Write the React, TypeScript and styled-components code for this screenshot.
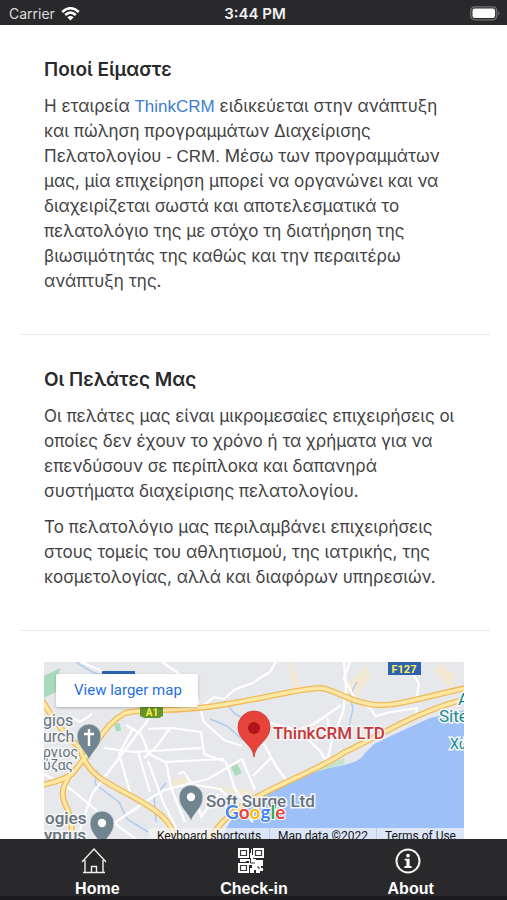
import React from "react";
import styled, { createGlobalStyle } from "styled-components";

const GlobalStyle = createGlobalStyle`
  *, *::before, *::after { box-sizing: border-box; }
  body {
    margin: 0;
    background: #fff;
    color: #414143;
    font-family: Inter, "Liberation Sans", sans-serif;
  }
`;

const Screen = styled.div`
  display: flex;
  flex-direction: column;
  height: 100vh;
`;

const StatusBar = styled.header`
  flex: none;
  display: grid;
  grid-template-columns: 1fr auto 1fr;
  align-items: center;
  height: 25px;
  padding: 2px 6px 0 9px;
  background: #29292b;
  color: #f2f2f2;
  font-size: 14px;
  line-height: 20px;
`;

const Carrier = styled.div`
  display: flex;
  align-items: center;
  gap: 6px;
  color: #dcdcdc;
`;

const Clock = styled.time`
  font-size: 15px;
  font-weight: 600;
`;

const Battery = styled.svg`
  justify-self: end;
`;

const Content = styled.main`
  flex: 1;
  min-height: 0;
  overflow: hidden auto;
  scrollbar-width: none;
  padding: 0 17px 0 20px;
`;

const Section = styled.section`
  padding: 32px 24px 29px;
  border-bottom: 1px solid #e9e9e9;
`;

const Title = styled.h2`
  margin: 0 0 11px;
  color: #29292b;
  font-size: 19px;
  font-weight: 600;
  line-height: 26px;
`;

const Paragraph = styled.p`
  margin: 0 0 11px;
  font-size: 17px;
  line-height: 25px;
`;

const Latin = styled.span`
  font-family: "Liberation Sans", Arial, sans-serif;
`;

const TextLink = styled.a`
  color: #3b7dd2;
  font-family: "Liberation Sans", Arial, sans-serif;
  text-decoration: none;
`;

const MapFrame = styled.div`
  position: relative;
  height: 180px;
  margin: 31px 26px 0 24px;
  overflow: hidden;
  border-radius: 2px;
  background: #e7e8ec;
`;

const MapDrawing = styled.svg`
  display: block;
  width: 100%;
  height: 100%;
  font-family: Roboto, sans-serif;
`;

const LargerMap = styled.a`
  position: absolute;
  top: 12px;
  left: 12px;
  padding: 0 16px 0 18px;
  border-radius: 2px;
  background: #fff;
  box-shadow: 0 1px 3px rgba(0, 0, 0, 0.25);
  color: #1f70dc;
  font: 15px/33px Roboto, sans-serif;
  text-decoration: none;
`;

const Attribution = styled.div`
  position: absolute;
  right: 0;
  bottom: 0;
  display: flex;
  height: 14px;
  font: 12px/16px Roboto, sans-serif;
  color: #171717;
`;

const attributionPart = `
  margin: 0;
  padding: 0 8px;
  border: 0;
  border-left: 1px solid #b9cdf0;
  background: rgba(245, 245, 245, 0.7);
  color: inherit;
  font: inherit;
  text-decoration: none;
  white-space: nowrap;
`;
const Shortcuts = styled.button`${attributionPart} border-left: 0;`;
const MapData = styled.span`${attributionPart}`;
const Terms = styled.a`${attributionPart}`;

const TabBar = styled.nav`
  flex: none;
  display: grid;
  grid-template-columns: repeat(3, 1fr);
  height: 61px;
  padding: 9px 18px 0 19px;
  border-bottom: 4px solid #1b1b1d;
  background: #29292b;
`;

const Tab = styled.a`
  display: flex;
  flex-direction: column;
  align-items: center;
  gap: 4px;
  color: #fff;
  font: 700 16px/18px "Liberation Sans", Arial, sans-serif;
  text-decoration: none;
`;

const TabIcon = styled.svg`
  margin-right: 6px;
`;

const streets = [
  "M37 0 Q65 12 96 26 T150 46",
  "M118 0 L150 22 L156 46 L160 60 L180 78 L198 84",
  "M156 46 L170 35 L180 37 L190 28 L211 20",
  "M211 19 L226 10 L232 0",
  "M0 112 L28 128 L52 148 L96 180",
  "M36 168 L48 132 L84 84 L104 58 L108 48",
  "M82 63 L97 72 L105 92 L121 100 L180 97",
  "M104 67 L128 66 L157 70 L160 92 L182 100",
  "M88 68 L75 92 L86 130 M126 66 L113 84 L100 96",
  "M48 52 L36 60 L28 56 L18 64",
  "M94 90 L106 130 M104 99 L120 142 L133 168 M122 100 L127 126 L141 160",
  "M60 86 L90 90 L157 86",
  "M60 168 L104 138 L120 128 L164 117 L198 97",
  "M134 112 L140 110 L150 126 L157 155 L174 132",
  "M182 100 L191 127 L199 138 M198 97 L211 128",
  "M210 65 L228 61 L254 68 L275 88 L283 100",
  "M216 75 L232 104 L242 118 M209 114 L227 96",
  "M283 56 L288 78 M283 100 L288 78 L299 50 L302 27 L300 0",
  "M306 0 L300 16 L310 35 L327 47 L332 55",
  "M332 54 L347 50 L373 46 L371 57 M372 39 L375 22 L362 0",
  "M209 160 L176 127 L152 123",
  "M254 68 L270 62 L297 43",
];

const highways = [
  "M-2 123 Q18 119 28 112 L53 80 Q65 60 81 51 Q94 48 119 48 C160 47 185 42 211 37 C238 32 262 26 277 26 C292 28 310 42 333 43 C354 44 380 35 422 26",
  "M-2 38 Q14 67 36 86 Q40 104 56 116 C78 131 102 139 119 155 Q132 168 130 182",
  "M25 115 Q15 128 21 142 Q30 158 27 182",
  "M162 182 C174 164 183 152 209 137 C241 119 274 108 301 90 C332 76 375 48 422 37",
];

const pins = [
  { x: 45, y: 76 },
  { x: 147, y: 137 },
  { x: 58, y: 163 },
];

function MapPicture() {
  return (
    <MapDrawing viewBox="0 0 420 180" preserveAspectRatio="xMidYMid slice" role="img" aria-label="Map showing ThinkCRM LTD">
      <rect width="420" height="180" fill="#e7e8ec" />
      <path d="M0 14 L16 6 L12 30 L0 36 Z M70 62 L76 61 L77 69 L72 69 Z M187 105 L193 102 L198 111 L191 114 Z" fill="#a9dabb" />
      <path d="M244 0 H249 L257 30 L250 31 Z M303 22 L323 3 L326 15 L309 39 L299 42 Z M397 2 L411 12 L406 27 L390 8 Z M128 117 L145 115 L145 123 L130 126 Z M174 125 L210 128 L208 136 L180 130 Z" fill="#f2e9d5" />
      <path d="M420 48 L386 56 L353 71 L330 82 L321 91 Q318 99 300 103 L276 108 L243 121 L213 137 L188 157 L172 182 H420 Z" fill="#9dc0f8" />
      <path d="M270 106 L301 96 L300 102 L275 109 Z" fill="#c6e4cd" />
      <path d="M32 0 L48 10 L66 16 L76 23 M180 39 L190 51 L201 58 M166 57 L183 64 L199 78 M53 108 L51 122 L75 140 L83 157 L104 170 M122 121 L110 136 L112 160 M313 20 L306 33 L309 47 L303 72" fill="none" stroke="#b1cbef" strokeWidth="1.5" />
      <g fill="none" stroke="#fff" strokeWidth="2.2" strokeLinejoin="round">
        {streets.map((d) => <path key={d} d={d} />)}
      </g>
      <g fill="none" stroke="#edba59" strokeWidth="6">
        {highways.map((d) => <path key={d} d={d} />)}
      </g>
      <g fill="none" stroke="#ffe7a5" strokeWidth="3.4">
        {highways.map((d) => <path key={d} d={d} />)}
      </g>
      <rect x="58" y="9" width="33" height="8" fill="#2d62b2" />
      <path d="M96 44 H119 V54 L115 56 H100 L96 54 Z" fill="#64942e" />
      <text x="108" y="54" textAnchor="middle" fontSize="10" fontWeight="700" fill="#fff23e">A1</text>
      <rect x="344" y="0" width="33" height="13" fill="#2d62b2" />
      <text x="360" y="11" textAnchor="middle" fontSize="11" fontWeight="700" fill="#fff04c">F127</text>
      {pins.map((pin) => (
        <g key={pin.x} transform={`translate(${pin.x} ${pin.y})`}>
          <path d="M0 22 C-3 13 -12 9 -12 -2 A12 12 0 0 1 12 -2 C12 9 3 13 0 22 Z" fill="#70858f" stroke="#dce2e5" strokeWidth="0.8" />
          {pin.x === 45
            ? <path d="M0 -9 V8 M-5 -4 H5" stroke="#fff" strokeWidth="2.4" />
            : <circle cy="-2" r="4.2" fill="#fff" />}
        </g>
      ))}
      <g stroke="#f4f5f7" strokeWidth="3" paintOrder="stroke" fill="#66737c">
        <text x="-1" y="64" fontSize="16">gios</text>
        <text x="-1" y="80" fontSize="16">urch</text>
        <text x="-1" y="95" fontSize="14">ργιος</text>
        <text x="-1" y="108" fontSize="14">ύζας</text>
        <text x="1" y="162" fontSize="17" fontWeight="500">ogies</text>
        <text x="0" y="179" fontSize="17" fontWeight="500">yprus</text>
        <text x="162" y="145" fontSize="17" fontWeight="500">Soft Surge Ltd</text>
        <text x="229" y="77" fontSize="17" fontWeight="500" fill="#c5383a">ThinkCRM LTD</text>
        <text x="414" y="43" fontSize="17" fill="#168b92">A</text>
        <text x="395" y="60" fontSize="17" fill="#168b92">Site</text>
        <text x="406" y="87" fontSize="14" fill="#168b92">Χώ</text>
      </g>
      <path d="M210 95 C209 82 194 79 194 65 A16 16 0 0 1 226 65 C226 79 211 82 210 95 Z" fill="#e8433a" stroke="#c73832" strokeWidth="0.8" />
      <circle cx="210" cy="66" r="6" fill="#b01419" />
      <text x="181" y="157" fontSize="19" fontFamily="Lato, sans-serif" fontWeight="700" stroke="#fff" strokeWidth="2" paintOrder="stroke">
        <tspan fill="#4285f4">G</tspan><tspan fill="#ea4335">o</tspan><tspan fill="#fbbc05">o</tspan><tspan fill="#4285f4">g</tspan><tspan fill="#34a853">l</tspan><tspan fill="#ea4335">e</tspan>
      </text>
    </MapDrawing>
  );
}

function HomeIcon() {
  return (
    <TabIcon width="26" height="28" viewBox="0 0 26 28" fill="none" stroke="#eee" strokeWidth="1.4" aria-hidden="true">
      <path d="M1 14 L13 1 L25 14 M4 12 V24 M22 12 V24 M2 24.5 H24 M10.5 24 V18.5 H15.5 V24" />
    </TabIcon>
  );
}

function QrIcon() {
  return (
    <TabIcon width="26" height="28" viewBox="0 0 26 28" aria-hidden="true">
      <path d="M0 0 H11 V10 H0 Z M15 0 H26 V10 H15 Z M0 15 H11 V25 H0 Z" fill="#fff" />
      <path d="M2.5 2.5 H8.5 V7.5 H2.5 Z M17.5 2.5 H23.5 V7.5 H17.5 Z M2.5 17.5 H8.5 V22.5 H2.5 Z" fill="#fff" stroke="#39393b" strokeWidth="1.2" />
      <path d="M12 5 H13 V1 H14 V7 H15 V11 H18 V12 H25 V18 H23 V20 H25 V23 H22 V25 H18 V22 H16 V25 H12 V20 H14 V17 H11 V13 H8 V14 H2 V11 H12 Z" fill="#fff" />
      <path d="M12.5 10 V15 H17 M19 19 H21 V21" fill="none" stroke="#39393b" strokeWidth="1" />
    </TabIcon>
  );
}

function InfoIcon() {
  return (
    <TabIcon width="26" height="28" viewBox="0 0 26 28" aria-hidden="true">
      <circle cx="13" cy="13" r="11.5" fill="none" stroke="#f2f2f2" strokeWidth="2" />
      <circle cx="13" cy="7.6" r="1.9" fill="#fff" />
      <path d="M9.6 10.8 H14.6 V18 H16.6 V20 H9.4 V18 H11.4 V12.6 H9.6 Z" fill="#fff" />
    </TabIcon>
  );
}

export default function App() {
  return (
    <>
      <GlobalStyle />
      <Screen>
        <StatusBar>
          <Carrier>
            Carrier
            <svg width="19" height="14" viewBox="0 0 19 14" aria-label="Wi-Fi">
              <path d="M1.2 5 Q9.5 -2.6 17.8 5 M4.2 8 Q9.5 3.2 14.8 8" fill="none" stroke="#fff" strokeWidth="2.5" />
              <path d="M6.4 10.3 Q9.5 7.5 12.6 10.3 L9.5 13.5 Z" fill="#fff" />
            </svg>
          </Carrier>
          <Clock>3:44 PM</Clock>
          <Battery width="31" height="15" viewBox="0 0 31 15" aria-label="Battery full">
            <rect x="0.8" y="0.8" width="26" height="13" rx="4" fill="none" stroke="#737375" strokeWidth="1.3" />
            <rect x="2.5" y="2.5" width="22.6" height="9.6" rx="2.3" fill="#fff" />
            <path d="M28.4 5 Q30.6 7.3 28.4 9.6 Z" fill="#737375" />
          </Battery>
        </StatusBar>
        <Content>
          <Section>
            <Title>Ποιοί Είμαστε</Title>
            <Paragraph>
              Η εταιρεία <TextLink href="#thinkcrm">ThinkCRM</TextLink> ειδικεύεται στην ανάπτυξη και πώληση
              προγραμμάτων Διαχείρισης Πελατολογίου <Latin>- CRM.</Latin> Μέσω των προγραμμάτων μας, μία επιχείρηση
              μπορεί να οργανώνει και να διαχειρίζεται σωστά και αποτελεσματικά το πελατολόγιο της με στόχο τη
              διατήρηση της βιωσιμότητάς της καθώς και την περαιτέρω ανάπτυξη της.
            </Paragraph>
          </Section>
          <Section>
            <Title>Οι Πελάτες Μας</Title>
            <Paragraph>
              Οι πελάτες μας είναι μικρομεσαίες επιχειρήσεις οι οποίες δεν έχουν το χρόνο ή τα χρήματα για να
              επενδύσουν σε περίπλοκα και δαπανηρά συστήματα διαχείρισης πελατολογίου.
            </Paragraph>
            <Paragraph>
              Το πελατολόγιο μας περιλαμβάνει επιχειρήσεις στους τομείς του αθλητισμού, της ιατρικής, της
              κοσμετολογίας, αλλά και διαφόρων υπηρεσιών.
            </Paragraph>
          </Section>
          <MapFrame>
            <MapPicture />
            <LargerMap href="#map">View larger map</LargerMap>
            <Attribution>
              <Shortcuts type="button">Keyboard shortcuts</Shortcuts>
              <MapData>Map data ©2022</MapData>
              <Terms href="#terms">Terms of Use</Terms>
            </Attribution>
          </MapFrame>
        </Content>
        <TabBar>
          <Tab href="#home"><HomeIcon />Home</Tab>
          <Tab href="#check-in"><QrIcon />Check-in</Tab>
          <Tab href="#about"><InfoIcon />About</Tab>
        </TabBar>
      </Screen>
    </>
  );
}
